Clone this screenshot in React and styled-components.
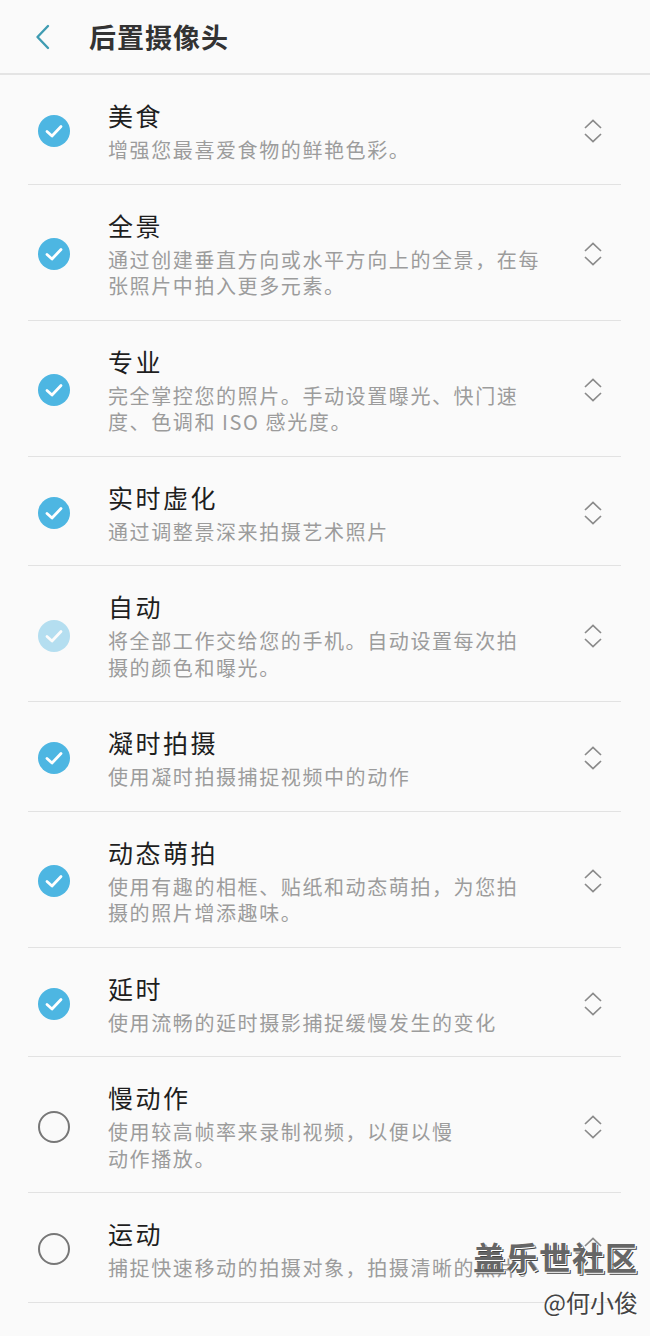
import React from 'react'
import styled, { createGlobalStyle } from 'styled-components'

const GlobalStyle = createGlobalStyle`
  html, body {
    margin: 0;
    padding: 0;
    background: #fafafa;
  }
  body {
    font-family: "Noto Sans CJK SC", "Noto Sans", sans-serif;
  }
`

const Page = styled.div`
  position: relative;
  width: 650px;
  min-height: 1336px;
  background: #fafafa;
  overflow: hidden;
`

const Header = styled.div`
  height: 73px;
  display: flex;
  align-items: center;
  border-bottom: 2px solid #e4e4e4;
`

const BackButton = styled.div`
  width: 89px;
  display: flex;
  align-items: center;
  padding-left: 34px;
  box-sizing: border-box;
`

const Title = styled.h1`
  margin: 0;
  font-size: 27px;
  font-weight: 700;
  color: #333;
  letter-spacing: 1px;
`

const List = styled.div`
  display: flex;
  flex-direction: column;
`

const Row = styled.div`
  display: flex;
  align-items: center;
  margin: 0 29px 0 28px;
  padding: 24px 0 20px;
  border-bottom: 1px solid #e2e2e2;
`

const CheckSlot = styled.div`
  width: 80px;
  display: flex;
  align-items: center;
  padding-left: 9px;
  box-sizing: border-box;
  opacity: ${p => (p.$faded ? 0.4 : 1)};
`

const Body = styled.div`
  flex: 1;
  min-width: 0;
`

const ItemTitle = styled.div`
  font-size: 25px;
  line-height: 32px;
  color: #1e1e1e;
  letter-spacing: 2.5px;
`

const ItemDesc = styled.div`
  margin-top: 6px;
  font-size: 20px;
  line-height: 26.5px;
  color: #9c9c9c;
  letter-spacing: 1.6px;
  white-space: nowrap;
`

const Handle = styled.div`
  width: 40px;
  display: flex;
  justify-content: center;
  margin-right: 8px;
`

const Watermark = styled.div`
  position: absolute;
  right: 12px;
  bottom: 19px;
  display: flex;
  flex-direction: column;
  align-items: flex-end;
  pointer-events: none;
`

const MarkBig = styled.div`
  font-size: 32px;
  font-weight: 700;
  line-height: 38px;
  color: #666;
  text-shadow: 1px 1px 0 #ffffff, 2px 2px 0 #444;
  letter-spacing: 1px;
`

const MarkSmall = styled.div`
  margin-top: 12px;
  font-size: 24px;
  line-height: 30px;
  color: #444;
  text-shadow: 1px 1px 0 #fff;
`

function Check({ on }) {
  if (!on) {
    return (
      <svg width="34" height="34" viewBox="0 0 34 34">
        <circle cx="17" cy="17" r="15" fill="none" stroke="#777" strokeWidth="2" />
      </svg>
    )
  }
  return (
    <svg width="34" height="34" viewBox="0 0 34 34">
      <circle cx="17" cy="17" r="16" fill="#4db6e2" />
      <path d="M10 17.5 L15 22 L24 12.5" fill="none" stroke="#fff" strokeWidth="2.8" strokeLinecap="round" strokeLinejoin="round" />
    </svg>
  )
}

function Reorder() {
  return (
    <svg width="20" height="26" viewBox="0 0 20 26">
      <path d="M2 10 L10 2.5 L18 10" fill="none" stroke="#8a8a8a" strokeWidth="1.7" />
      <path d="M2 16 L10 23.5 L18 16" fill="none" stroke="#8a8a8a" strokeWidth="1.7" />
    </svg>
  )
}

const items = [
  { title: '美食', desc: ['增强您最喜爱食物的鲜艳色彩。'], on: true },
  { title: '全景', desc: ['通过创建垂直方向或水平方向上的全景，在每', '张照片中拍入更多元素。'], on: true },
  { title: '专业', desc: ['完全掌控您的照片。手动设置曝光、快门速', '度、色调和 ISO 感光度。'], on: true },
  { title: '实时虚化', desc: ['通过调整景深来拍摄艺术照片'], on: true },
  { title: '自动', desc: ['将全部工作交给您的手机。自动设置每次拍', '摄的颜色和曝光。'], on: true, faded: true },
  { title: '凝时拍摄', desc: ['使用凝时拍摄捕捉视频中的动作'], on: true },
  { title: '动态萌拍', desc: ['使用有趣的相框、贴纸和动态萌拍，为您拍', '摄的照片增添趣味。'], on: true },
  { title: '延时', desc: ['使用流畅的延时摄影捕捉缓慢发生的变化'], on: true },
  { title: '慢动作', desc: ['使用较高帧率来录制视频，以便以慢', '动作播放。'], on: false },
  { title: '运动', desc: ['捕捉快速移动的拍摄对象，拍摄清晰的照片。'], on: false },
]

export default function App() {
  return (
    <Page>
      <GlobalStyle />
      <Header>
        <BackButton>
          <svg width="18" height="28" viewBox="0 0 18 28">
            <path d="M14 3 L3.5 14 L14 25" fill="none" stroke="#3f9cb2" strokeWidth="2.4" strokeLinecap="round" strokeLinejoin="round" />
          </svg>
        </BackButton>
        <Title>后置摄像头</Title>
      </Header>
      <List>
        {items.map(item => (
          <Row key={item.title}>
            <CheckSlot $faded={item.faded}>
              <Check on={item.on} />
            </CheckSlot>
            <Body>
              <ItemTitle>{item.title}</ItemTitle>
              <ItemDesc>
                {item.desc.map((line, i) => (
                  <div key={i}>{line}</div>
                ))}
              </ItemDesc>
            </Body>
            <Handle>
              <Reorder />
            </Handle>
          </Row>
        ))}
      </List>
      <Watermark>
        <MarkBig>盖乐世社区</MarkBig>
        <MarkSmall>@何小俊</MarkSmall>
      </Watermark>
    </Page>
  )
}
